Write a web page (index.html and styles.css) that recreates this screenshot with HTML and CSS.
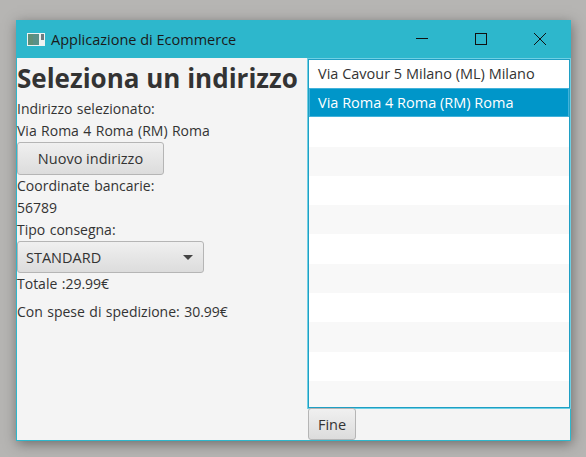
FILE: index.html
```html
<!DOCTYPE html>
<html lang="en">
<head>
    <meta charset="UTF-8">
    <meta name="viewport" content="width=device-width, initial-scale=1.0">
    <title>Applicazione di Ecommerce</title>
    <link rel="stylesheet" href="styles.css">
</head>
<body>
    <div class="window">
        <div class="title-bar">
            <svg class="app-icon" width="18" height="13" viewBox="0 0 18 13">
                <rect width="18" height="13" fill="#eef2f2"/>
                <rect x="1" y="1" width="11" height="11" fill="#5a9088"/>
                <rect x="1" y="1" width="5" height="11" fill="#5f8f78"/>
                <rect x="14" y="1" width="3" height="6" fill="#6d7b80"/>
            </svg>
            <span class="title-text">Applicazione di Ecommerce</span>
            <div class="window-controls">
                <svg width="12" height="12" viewBox="0 0 12 12"><path d="M0 5.5H12" stroke="#111" fill="none"/></svg>
                <svg width="12" height="12" viewBox="0 0 12 12"><rect x="0.5" y="0.5" width="11" height="11" stroke="#111" fill="none"/></svg>
                <svg width="12" height="12" viewBox="0 0 12 12"><path d="M0 0L12 12M12 0L0 12" stroke="#111" fill="none"/></svg>
            </div>
        </div>
        <div class="content">
            <div class="left-pane">
                <h1>Seleziona un indirizzo</h1>
                <p class="label">Indirizzo selezionato:</p>
                <p class="label">Via Roma 4 Roma (RM) Roma</p>
                <button class="btn btn-new" type="button">Nuovo indirizzo</button>
                <p class="label">Coordinate bancarie:</p>
                <p class="label">56789</p>
                <p class="label">Tipo consegna:</p>
                <div class="combo">
                    <span>STANDARD</span>
                    <span class="combo-arrow"></span>
                </div>
                <p class="label">Totale :29.99€</p>
                <p class="label label-shipping">Con spese di spedizione: 30.99€</p>
            </div>
            <div class="right-pane">
                <ul class="address-list">
                    <li>Via Cavour 5 Milano (ML) Milano</li>
                    <li class="selected">Via Roma 4 Roma (RM) Roma</li>
                    <li></li>
                    <li></li>
                    <li></li>
                    <li></li>
                    <li></li>
                    <li></li>
                    <li></li>
                    <li></li>
                    <li></li>
                    <li></li>
                </ul>
                <button class="btn btn-end" type="button">Fine</button>
            </div>
        </div>
    </div>
</body>
</html>
```

FILE: styles.css
```css
html, body {
    height: 100%;
}

body {
    margin: 0;
    padding: 20px 15px 16px 16px;
    box-sizing: border-box;
    background-color: #b6b5b3;
    font-family: "Open Sans", "Noto Sans", sans-serif;
    font-size: 14.5px;
    color: #333;
}

.window {
    height: 421px;
    display: flex;
    flex-direction: column;
    background-color: #f4f4f4;
    border: 1px solid #2db7cc;
    border-top: 0;
    box-sizing: border-box;
    box-shadow: 1px 3px 12px rgba(50, 50, 50, 0.55);
}

.title-bar {
    height: 38px;
    flex: none;
    display: flex;
    align-items: center;
    padding-left: 10px;
    background-color: #2db7cc;
    color: #1a1a1a;
}

.app-icon {
    margin-right: 6px;
}

.window-controls {
    margin-left: auto;
    display: flex;
    gap: 47px;
    padding-right: 24px;
}

.content {
    flex: 1;
    display: flex;
    min-height: 0;
}

.left-pane {
    width: 291px;
    flex: none;
}

h1 {
    margin: 0;
    height: 40px;
    line-height: 40px;
    font-size: 26px;
    font-weight: 700;
    white-space: nowrap;
}

.label {
    margin: 0;
    height: 22px;
    line-height: 22px;
    font-size: 14px;
    word-spacing: 0.8px;
    white-space: nowrap;
}

.label-shipping {
    margin-top: 6px;
}

.btn {
    display: block;
    padding: 0;
    border: 1px solid #b5b5b5;
    border-radius: 3px;
    background: linear-gradient(#f0f0f0, #dcdcdc);
    font-family: inherit;
    font-size: 14.5px;
    color: #333;
}

.btn-new {
    width: 147px;
    height: 33px;
}

.combo {
    width: 187px;
    height: 32px;
    display: flex;
    align-items: center;
    justify-content: space-between;
    box-sizing: border-box;
    padding: 0 8px;
    border: 1px solid #b5b5b5;
    border-radius: 3px;
    background: linear-gradient(#f0f0f0, #dcdcdc);
}

.combo-arrow {
    width: 0;
    height: 0;
    margin-right: 2px;
    border-left: 5px solid transparent;
    border-right: 5px solid transparent;
    border-top: 5px solid #444;
}

.right-pane {
    flex: 1;
    min-width: 0;
    display: flex;
    flex-direction: column;
}

.address-list {
    margin: 1px 0 0;
    padding: 0;
    list-style: none;
    height: 349px;
    box-sizing: border-box;
    overflow: hidden;
    background-color: #fff;
    border: 1px solid #1f9fc4;
    box-shadow: 0 0 0 1px #6fd0e4;
}

.address-list li {
    height: 29.3px;
    line-height: 29px;
    box-sizing: border-box;
    padding-left: 9px;
    background-color: #fff;
}

.address-list li:nth-child(even) {
    background-color: #f8f8f8;
}

.address-list li:first-child {
    height: 28px;
    line-height: 28px;
}

.address-list li.selected {
    line-height: 27px;
    background-color: #0096c9;
    border: 1px solid #42b2da;
    padding-left: 8px;
    color: #fff;
}

.btn-end {
    width: 48px;
    height: 32px;
}
```
